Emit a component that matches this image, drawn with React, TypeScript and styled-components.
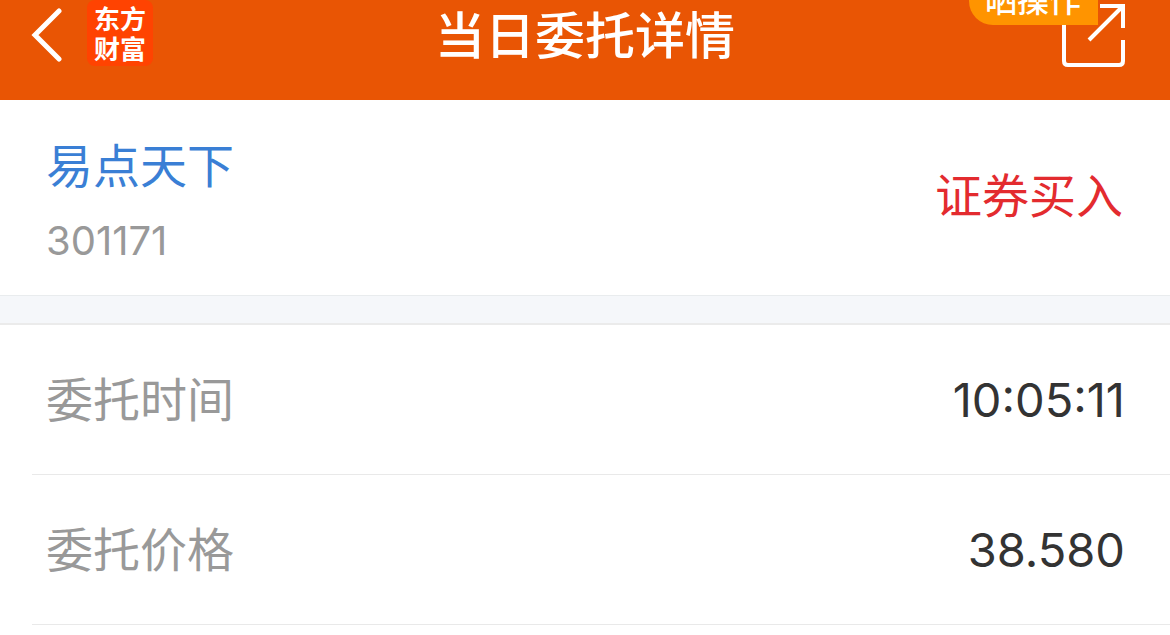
import React from "react";
import styled, { createGlobalStyle } from "styled-components";

const GlobalStyle = createGlobalStyle`
  * {
    box-sizing: border-box;
  }
  body {
    margin: 0;
    background: #ffffff;
    font-family: Inter, "Noto Sans CJK SC", sans-serif;
    color: #333333;
  }
`;

const Page = styled.div`
  overflow: hidden;
`;

const Header = styled.header`
  position: relative;
  display: grid;
  grid-template-columns: 1fr auto 1fr;
  align-items: start;
  height: 100px;
  background: #e95504;
  color: #ffffff;
`;

const Brand = styled.div`
  display: flex;
  gap: 25px;
  padding-left: 31px;
`;

const IconButton = styled.button`
  display: flex;
  align-items: center;
  height: 70px;
  padding: 0;
  border: 0;
  background: none;
  color: inherit;
  cursor: pointer;
`;

const Logo = styled.a`
  display: flex;
  flex-direction: column;
  height: 66px;
  padding: 3px 7px;
  border-radius: 8px;
  background: #ff4301;
  color: #ffffff;
  font-family: "Noto Sans CJK SC", sans-serif;
  font-size: 26px;
  font-weight: 700;
  line-height: 30px;
  text-decoration: none;
`;

const Title = styled.h1`
  margin: 0;
  font-family: "Noto Sans CJK SC", sans-serif;
  font-size: 50px;
  font-weight: 500;
  line-height: 64px;
`;

const Actions = styled.div`
  display: flex;
  justify-content: flex-end;
  padding-right: 45px;
`;

const Badge = styled.span`
  position: absolute;
  top: -23px;
  right: 72px;
  padding: 0 17px 0 16px;
  border-radius: 24px 24px 0 24px;
  background: #ff9400;
  font-size: 32px;
  font-weight: 500;
  line-height: 48px;
`;

const Summary = styled.section`
  display: flex;
  align-items: center;
  justify-content: space-between;
  height: 195px;
  padding: 0 47px 0 46px;
`;

const StockName = styled.a`
  display: block;
  color: #3a7fd5;
  font-size: 47px;
  line-height: 70px;
  text-decoration: none;
`;

const StockCode = styled.div`
  padding-top: 16px;
  color: #999999;
  font-size: 40px;
  line-height: 48px;
`;

const Direction = styled.strong`
  padding-bottom: 4px;
  color: #e32b2f;
  font-size: 47px;
  font-weight: 400;
  line-height: 70px;
`;

const Divider = styled.div`
  height: 30px;
  border-top: 1px solid #e9ecee;
  border-bottom: 2px solid #ebebeb;
  background: #f5f7fa;
`;

const Details = styled.dl`
  margin: 0 0 0 32px;
`;

const Row = styled.div`
  display: flex;
  align-items: center;
  justify-content: space-between;
  height: 150px;
  padding: 0 45px 0 14px;
  border-bottom: 1px solid #e9e9e9;
  font-size: 47px;
  line-height: 70px;
`;

const Label = styled.dt`
  color: #999999;
`;

const Value = styled.dd`
  margin: 0;
`;

const rows = [
  { label: "委托时间", value: "10:05:11" },
  { label: "委托价格", value: "38.580" },
];

export default function App() {
  return (
    <Page>
      <GlobalStyle />
      <Header>
        <Brand>
          <IconButton type="button" aria-label="返回">
            <svg width="31" height="54" viewBox="0 0 31 54" fill="none" stroke="currentColor" strokeWidth="5">
              <path d="M28 3 4 27l24 24" strokeLinecap="round" />
            </svg>
          </IconButton>
          <Logo href="#">
            <span>东方</span>
            <span>财富</span>
          </Logo>
        </Brand>
        <Title>当日委托详情</Title>
        <Actions>
          <IconButton type="button" aria-label="分享">
            <svg width="63" height="63" viewBox="0 0 63 63" fill="none" stroke="currentColor" strokeWidth="4">
              <path d="M2 18v39q0 4 4 4h51q4 0 4-4V36" />
              <path d="M38 2h23v22M60 3 27 36" />
            </svg>
          </IconButton>
        </Actions>
        <Badge>晒操作</Badge>
      </Header>
      <main>
        <Summary>
          <div>
            <StockName href="#">易点天下</StockName>
            <StockCode>301171</StockCode>
          </div>
          <Direction>证券买入</Direction>
        </Summary>
        <Divider />
        <Details>
          {rows.map((row) => (
            <Row key={row.label}>
              <Label>{row.label}</Label>
              <Value>{row.value}</Value>
            </Row>
          ))}
        </Details>
      </main>
    </Page>
  );
}
